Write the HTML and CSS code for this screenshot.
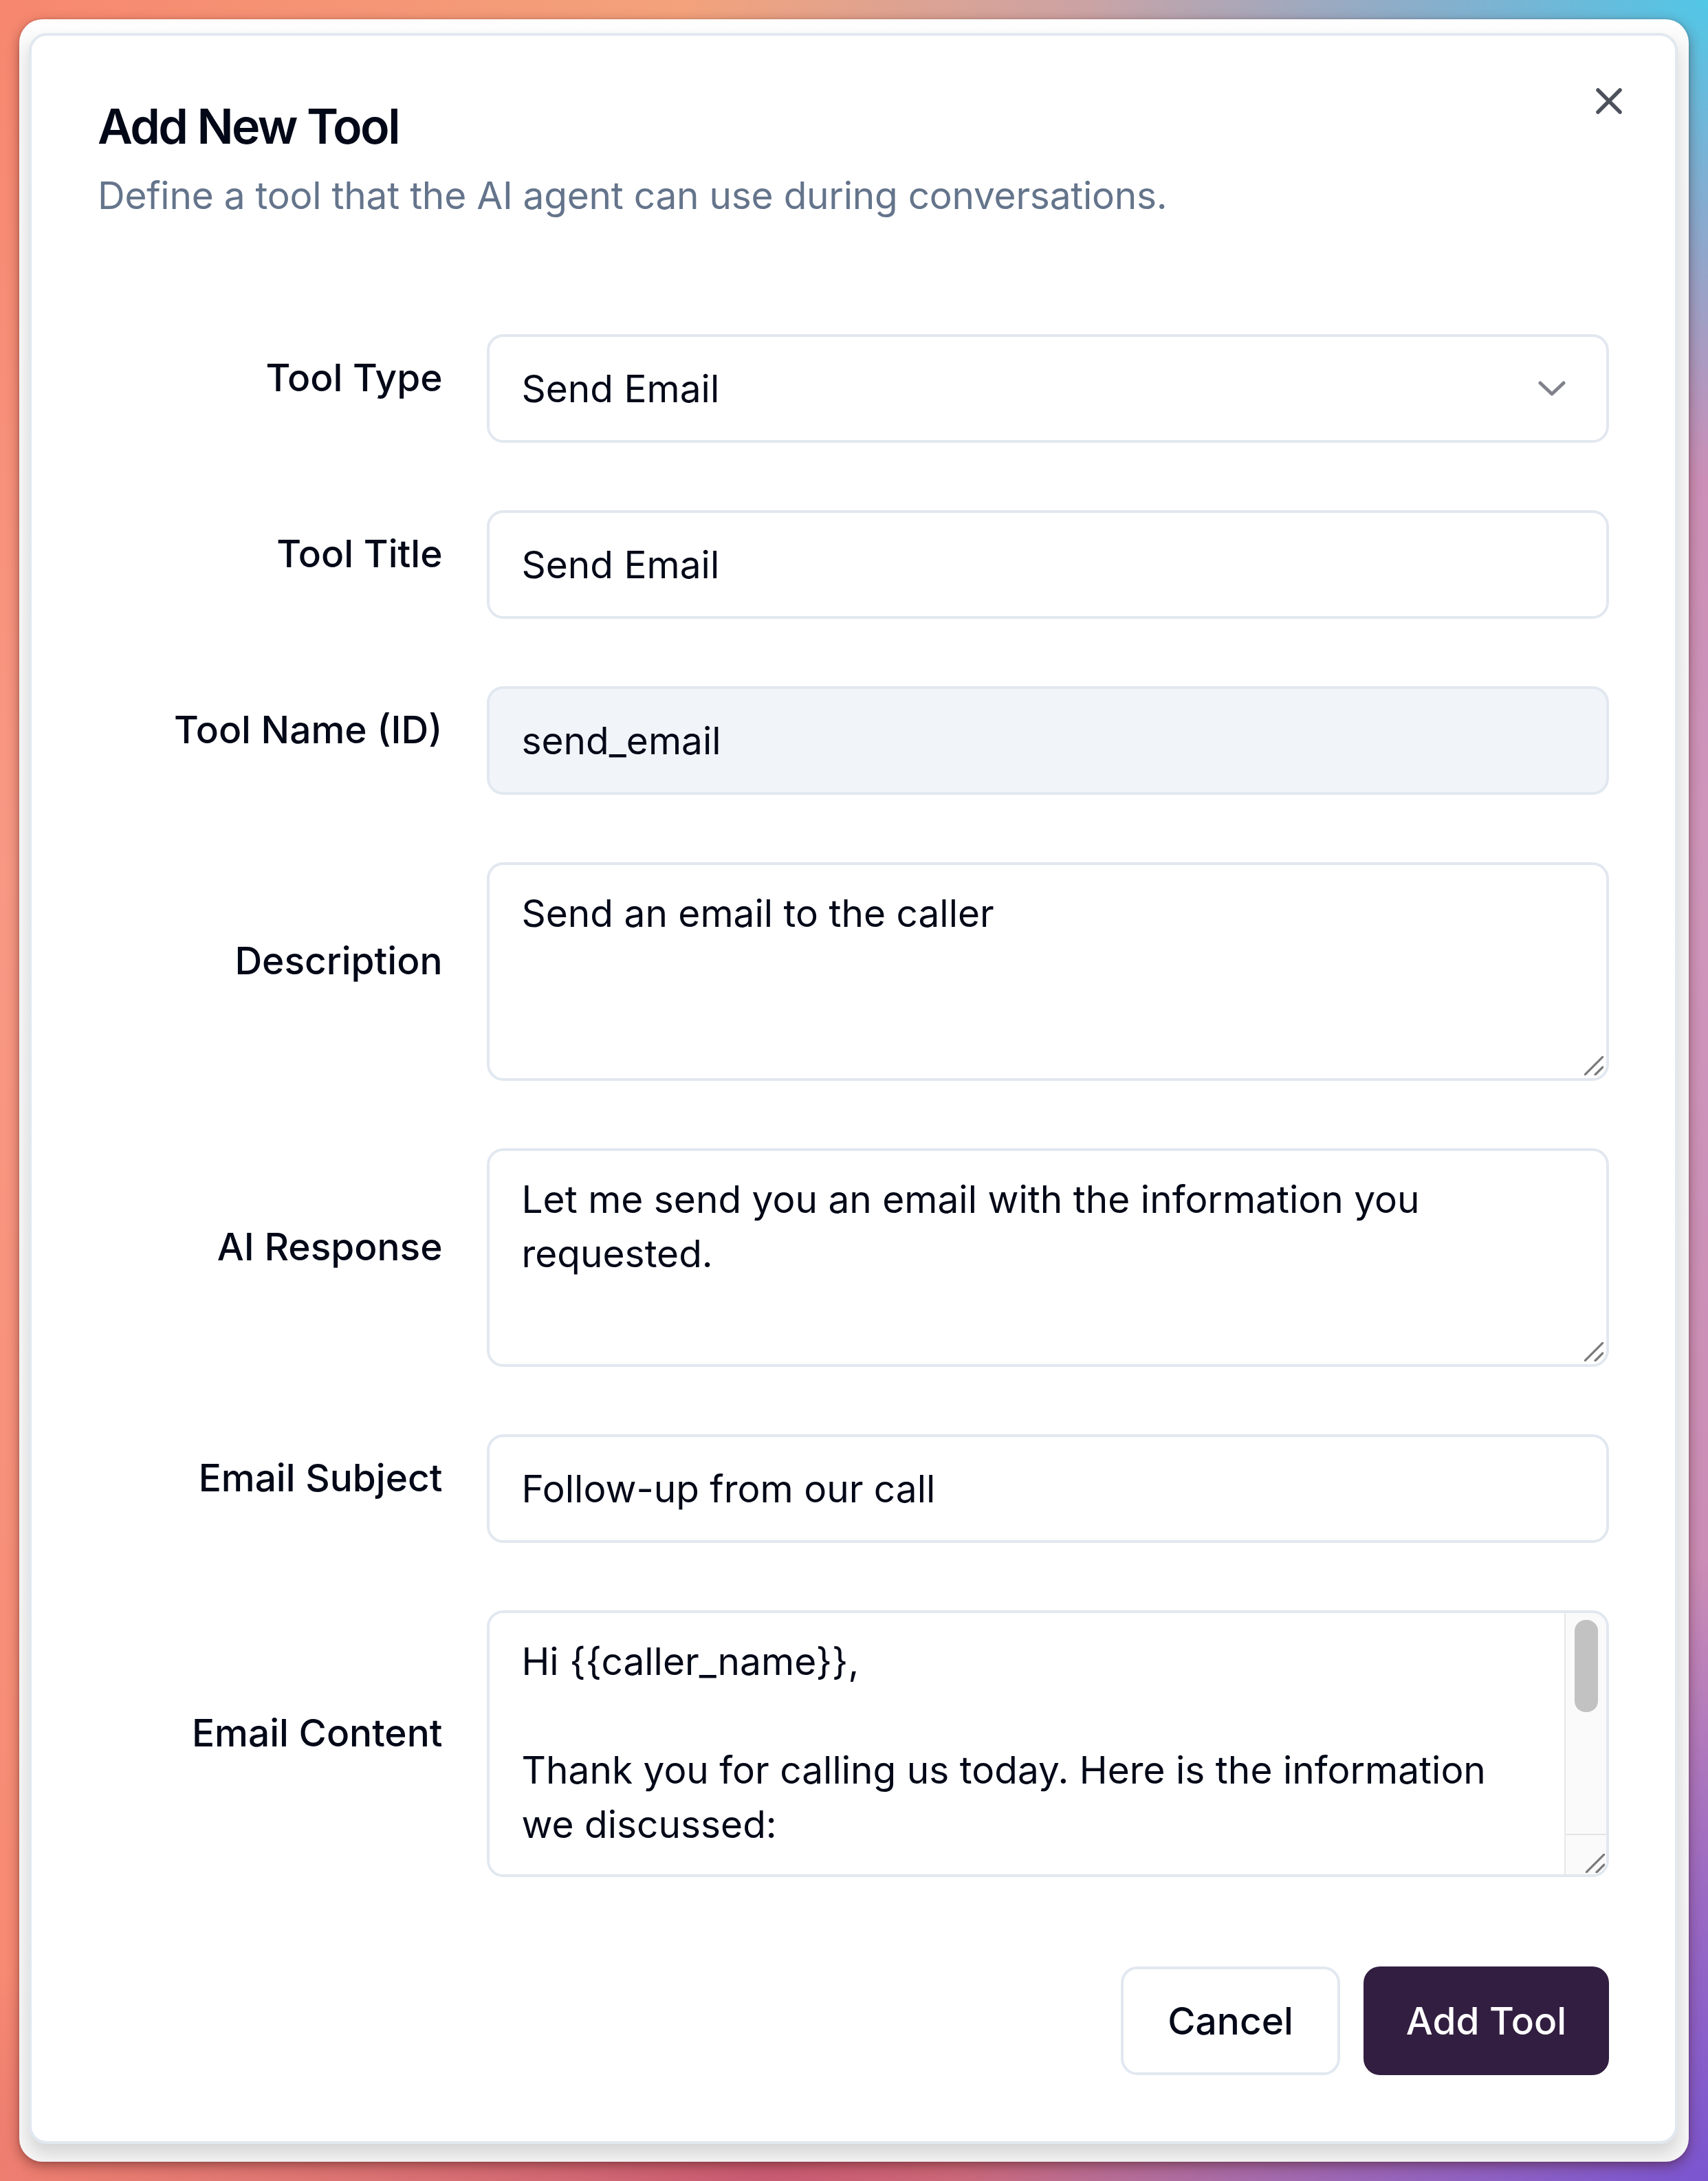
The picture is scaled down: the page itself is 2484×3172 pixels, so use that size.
FILE: index.html
```html
<!DOCTYPE html>
<html lang="en">
<head>
<meta charset="utf-8">
<title>Add New Tool</title>
<link rel="stylesheet" href="styles.css">
</head>
<body>
<div class="frame">
  <div class="dialog" role="dialog">
    <button class="close" type="button" aria-label="Close">
      <svg width="38" height="38" viewBox="0 0 38 38"><path d="M3 3 L35 35 M35 3 L3 35" stroke="#020817" stroke-width="5.5" stroke-linecap="round" fill="none"/></svg>
    </button>
    <header class="dialog-header">
      <h2 class="title">Add New Tool</h2>
      <p class="subtitle">Define a tool that the AI agent can use during conversations.</p>
    </header>
    <form class="form">
      <div class="row">
        <label class="label">Tool Type</label>
        <div class="field select">
          <span>Send Email</span>
          <svg class="chev" width="40" height="22" viewBox="0 0 40 22"><path d="M3 3 L20 19 L37 3" stroke="#020817" stroke-width="5" stroke-linecap="round" stroke-linejoin="round" fill="none"/></svg>
        </div>
      </div>
      <div class="row">
        <label class="label">Tool Title</label>
        <input class="field input" type="text" value="Send Email">
      </div>
      <div class="row">
        <label class="label">Tool Name (ID)</label>
        <input class="field input readonly" type="text" value="send_email" readonly>
      </div>
      <div class="row">
        <label class="label">Description</label>
        <div class="field area">
          <textarea class="ta">Send an email to the caller</textarea>
          <svg class="grip" width="28" height="28" viewBox="0 0 28 28"><path d="M1 27 L27 1 M16 27 L27 16" stroke="#7a7a7a" stroke-width="3.2" stroke-linecap="round" fill="none"/></svg>
        </div>
      </div>
      <div class="row">
        <label class="label">AI Response</label>
        <div class="field area">
          <textarea class="ta">Let me send you an email with the information you
requested.</textarea>
          <svg class="grip" width="28" height="28" viewBox="0 0 28 28"><path d="M1 27 L27 1 M16 27 L27 16" stroke="#7a7a7a" stroke-width="3.2" stroke-linecap="round" fill="none"/></svg>
        </div>
      </div>
      <div class="row">
        <label class="label">Email Subject</label>
        <input class="field input" type="text" value="Follow-up from our call">
      </div>
      <div class="row">
        <label class="label">Email Content</label>
        <div class="field area scroll-area">
          <textarea class="ta ta-content">Hi {{caller_name}},

Thank you for calling us today. Here is the information
we discussed:</textarea>
          <div class="scrollbar">
            <div class="track"><div class="thumb"></div></div>
            <div class="corner">
              <svg width="28" height="28" viewBox="0 0 28 28"><path d="M1 27 L27 1 M16 27 L27 16" stroke="#7a7a7a" stroke-width="3.2" stroke-linecap="round" fill="none"/></svg>
            </div>
          </div>
        </div>
      </div>
    </form>
    <footer class="footer">
      <button class="btn btn-outline" type="button">Cancel</button>
      <button class="btn btn-primary" type="button">Add Tool</button>
    </footer>
  </div>
</div>
</body>
</html>
```

FILE: styles.css
```css
html, body {
  margin: 0;
  padding: 0;
}

body {
  width: 2484px;
  height: 3172px;
  overflow: hidden;
  font-family: Inter, "Noto Sans", "Liberation Sans", sans-serif;
  color: #020817;
  background:
    radial-gradient(ellipse 900px 700px at 100% 0%, #52c7e6 0%, rgba(82, 199, 230, 0.6) 40%, rgba(82, 199, 230, 0) 100%),
    radial-gradient(ellipse 1100px 900px at 100% 100%, #7a55cf 0%, rgba(122, 85, 207, 0.6) 45%, rgba(122, 85, 207, 0) 100%),
    radial-gradient(ellipse 1400px 500px at 45% 100%, #c95a72 0%, rgba(201, 90, 114, 0) 100%),
    linear-gradient(180deg, rgba(255, 255, 255, 0) 0%, rgba(255, 255, 255, 0.15) 40%, rgba(255, 255, 255, 0) 100%),
    linear-gradient(90deg, #f7876f 0%, #f3a27b 40%, #c9a3a6 65%, #c784b0 100%);
}

.frame {
  box-sizing: border-box;
  margin: 28px 0 0 28px;
  width: 2428px;
  height: 3116px;
  border-radius: 34px;
  padding: 20px 16px 0 14px;
  background: linear-gradient(180deg, #ffffff 0px, #f7f8f7 40px, #f5f5f5 100%);
  box-shadow: 0 6px 18px rgba(70, 20, 20, 0.45), 0 0 4px rgba(0, 0, 0, 0.15);
}

.dialog {
  position: relative;
  box-sizing: border-box;
  width: 2398px;
  background: #ffffff;
  border: 4px solid #e2e8f0;
  border-radius: 26px;
  padding: 96px;
  box-shadow: 0 14px 22px rgba(0, 0, 0, 0.13);
}

.close {
  position: absolute;
  top: 76px;
  right: 77px;
  width: 38px;
  height: 38px;
  padding: 0;
  border: none;
  background: transparent;
  opacity: 0.7;
  display: flex;
}

.dialog-header {
  display: flex;
  flex-direction: column;
  gap: 24px;
}

.title {
  margin: 0;
  font-size: 70px;
  line-height: 72px;
  font-weight: 600;
  letter-spacing: -2.6px;
  color: #020817;
}

.subtitle {
  margin: 0;
  font-size: 55px;
  line-height: 80px;
  letter-spacing: -0.25px;
  color: #64748b;
}

.form {
  margin: 162px 0 0;
  display: flex;
  flex-direction: column;
  gap: 98px;
}

.row {
  display: grid;
  grid-template-columns: repeat(4, 1fr);
  column-gap: 64px;
  align-items: center;
}

.label {
  grid-column: 1;
  text-align: right;
  font-size: 55px;
  line-height: 79px;
  font-weight: 500;
  color: #020817;
  margin-bottom: 32px;
}

.field {
  grid-column: 2 / span 3;
  box-sizing: border-box;
  width: 100%;
  border: 4px solid #e2e8f0;
  border-radius: 24px;
  background: #ffffff;
  font-family: Inter, "Noto Sans", "Liberation Sans", sans-serif;
  font-size: 55px;
  line-height: 79px;
  color: #020817;
}

.input {
  height: 158px;
  padding: 0 47px;
  outline: none;
  margin: 0;
}

.readonly {
  background: #f1f5f9;
}

.select {
  height: 158px;
  padding: 0 59px 0 47px;
  display: flex;
  align-items: center;
  justify-content: space-between;
}

.chev {
  opacity: 0.5;
  display: block;
}

.area {
  position: relative;
  height: 318px;
  overflow: hidden;
  display: flex;
}

.ta {
  flex: 1;
  box-sizing: border-box;
  margin: 0;
  border: none;
  outline: none;
  resize: none;
  background: transparent;
  padding: 31px 47px;
  font-family: Inter, "Noto Sans", "Liberation Sans", sans-serif;
  font-size: 55px;
  line-height: 79px;
  color: #020817;
  white-space: pre;
  overflow: hidden;
}

.grip {
  position: absolute;
  right: 4px;
  bottom: 4px;
}

.scroll-area {
  height: 388px;
}

.scrollbar {
  width: 59px;
  display: flex;
  flex-direction: column;
  background: #fafafa;
  border-left: 2px solid #e8e8e8;
}

.track {
  flex: 1;
  padding: 10px 12px 0 13px;
}

.thumb {
  height: 134px;
  border-radius: 16px;
  background: #c2c2c2;
}

.corner {
  box-sizing: border-box;
  height: 59px;
  border-top: 2px solid #e3e3e3;
  display: flex;
  align-items: flex-end;
  justify-content: flex-end;
  padding: 0 2px 2px 0;
}

.corner svg {
  display: block;
}

.footer {
  margin-top: 130px;
  display: flex;
  justify-content: flex-end;
  gap: 34px;
}

.btn {
  box-sizing: border-box;
  height: 158px;
  padding: 0 64px;
  border-radius: 24px;
  font-family: Inter, "Noto Sans", "Liberation Sans", sans-serif;
  font-size: 55px;
  line-height: 79px;
  font-weight: 500;
  cursor: pointer;
}

.btn-outline {
  background: #ffffff;
  border: 4px solid #e2e8f0;
  color: #020817;
}

.btn-primary {
  padding: 0 62px;
  background: #321e40;
  border: none;
  color: #ffffff;
}
```
